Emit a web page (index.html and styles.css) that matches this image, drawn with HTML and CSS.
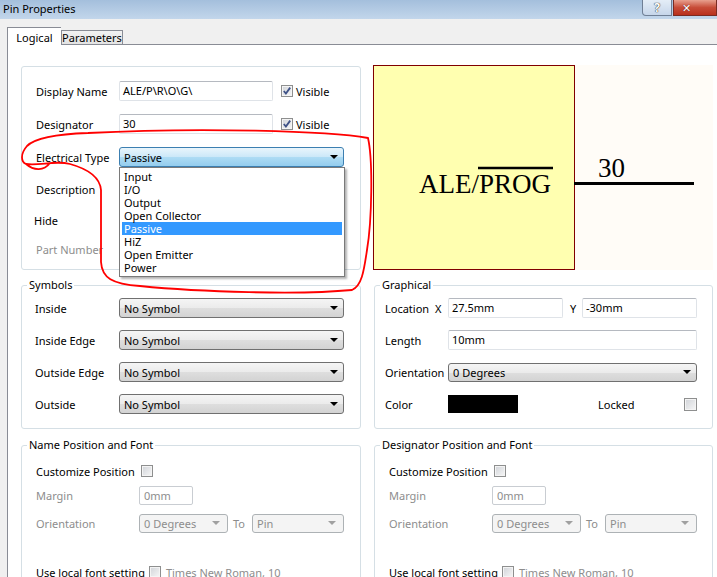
FILE: index.html
```html
<!DOCTYPE html>
<html lang="en">
<head>
  <meta charset="UTF-8" />
  <title>Pin Properties</title>
  <link rel="stylesheet" href="styles.css">
</head>
<body>

  <!-- Title bar -->
  <div class="titlebar">
    <span class="title">Pin Properties</span>
    <div class="caption-btns">
      <span class="btn-help">?</span>
      <span class="btn-close">✕</span>
    </div>
  </div>

  <!-- Tabs -->
  <div class="tabs">
    <div class="tab active">Logical</div>
    <div class="tab">Parameters</div>
  </div>

  <div class="page">
    <div class="grid">

      <!-- General -->
      <div class="box general">
        <div class="field">
          <label>Display Name</label>
          <div class="txt name">ALE/P\R\O\G\</div>
          <span class="chk checked"><svg viewBox="0 0 11 11"><path d="M2 5.5 L4.3 8.3 L9 1.8" /></svg></span>
          <span class="chk-label">Visible</span>
        </div>
        <div class="field">
          <label>Designator</label>
          <div class="txt name">30</div>
          <span class="chk checked"><svg viewBox="0 0 11 11"><path d="M2 5.5 L4.3 8.3 L9 1.8" /></svg></span>
          <span class="chk-label">Visible</span>
        </div>
        <div class="field">
          <label>Electrical Type</label>
          <div class="combo">
            <div class="sel hot wide"><span>Passive</span><i class="arrow"></i></div>
            <ul class="droplist">
              <li>Input</li>
              <li>I/O</li>
              <li>Output</li>
              <li>Open Collector</li>
              <li class="selected">Passive</li>
              <li>HiZ</li>
              <li>Open Emitter</li>
              <li>Power</li>
            </ul>
          </div>
        </div>
        <div class="field">
          <label>Description</label>
          <div class="txt wide"></div>
        </div>
        <div class="field">
          <label class="hide-label">Hide</label>
          <span class="chk hide-chk"></span>
        </div>
        <div class="field">
          <label class="off">Part Number</label>
          <div class="txt wide"></div>
        </div>
      </div>

      <!-- Preview -->
      <div class="preview">
        <svg width="341" height="205" viewBox="0 0 341 205">
          <rect x="1.5" y="0.5" width="201" height="204" fill="#ffffb0" stroke="#800000" stroke-width="1" />
          <text x="47" y="128" class="pv-text">ALE/PROG</text>
          <line x1="106" y1="103" x2="181" y2="103" stroke="#000" stroke-width="2.5" />
          <line x1="202" y1="118.5" x2="322" y2="118.5" stroke="#000" stroke-width="3" />
          <text x="226" y="112" class="pv-text">30</text>
        </svg>
      </div>

      <!-- Symbols -->
      <fieldset class="group sym">
        <legend>Symbols</legend>
        <div class="inner">
          <div class="srow"><label>Inside</label><div class="sel wide"><span>No Symbol</span><i class="arrow"></i></div></div>
          <div class="srow"><label>Inside Edge</label><div class="sel wide"><span>No Symbol</span><i class="arrow"></i></div></div>
          <div class="srow"><label>Outside Edge</label><div class="sel wide"><span>No Symbol</span><i class="arrow"></i></div></div>
          <div class="srow"><label>Outside</label><div class="sel wide"><span>No Symbol</span><i class="arrow"></i></div></div>
        </div>
      </fieldset>

      <!-- Graphical -->
      <fieldset class="group graph">
        <legend>Graphical</legend>
        <div class="inner">
          <div class="srow">
            <label class="loc">Location</label><span class="axis">X</span>
            <div class="txt half">27.5mm</div>
            <span class="axis y">Y</span>
            <div class="txt half">-30mm</div>
          </div>
          <div class="srow"><label class="glabel">Length</label><div class="txt full">10mm</div></div>
          <div class="srow"><label class="glabel">Orientation</label><div class="sel full"><span>0 Degrees</span><i class="arrow"></i></div></div>
          <div class="srow">
            <label class="glabel">Color</label>
            <span class="swatch"></span>
            <span class="locked">Locked</span>
            <span class="chk locked-chk"></span>
          </div>
        </div>
      </fieldset>

      <!-- Name position -->
      <fieldset class="group pos">
        <legend>Name Position and Font</legend>
        <div class="inner">
          <div class="prow first"><span>Customize Position</span><span class="chk"></span></div>
          <div class="prow"><label class="off">Margin</label><div class="txt off small">0mm</div></div>
          <div class="prow">
            <label class="off">Orientation</label>
            <div class="sel off deg"><span>0 Degrees</span><i class="arrow"></i></div>
            <span class="off to">To</span>
            <div class="sel off pin"><span>Pin</span><i class="arrow"></i></div>
          </div>
          <div class="prow font"><span>Use local font setting</span><span class="chk"></span><span class="off">Times New Roman, 10</span></div>
        </div>
      </fieldset>

      <!-- Designator position -->
      <fieldset class="group pos right">
        <legend>Designator Position and Font</legend>
        <div class="inner">
          <div class="prow first"><span>Customize Position</span><span class="chk"></span></div>
          <div class="prow"><label class="off">Margin</label><div class="txt off small">0mm</div></div>
          <div class="prow">
            <label class="off">Orientation</label>
            <div class="sel off deg"><span>0 Degrees</span><i class="arrow"></i></div>
            <span class="off to">To</span>
            <div class="sel off pin"><span>Pin</span><i class="arrow"></i></div>
          </div>
          <div class="prow font"><span>Use local font setting</span><span class="chk"></span><span class="off">Times New Roman, 10</span></div>
        </div>
      </fieldset>

    </div>
  </div>

  <!-- hand-drawn red marker -->
  <svg class="annotation" width="717" height="577" viewBox="0 0 717 577">
    <path d="M88 133 C60 134 36 137 27 146 C20 154 21 162 26 164 C40 166 55 160 70 164 C88 169 100 178 101 190 L101 262 C102 278 112 284 140 286 C200 292 300 295 352 290 C362 286 364 270 367 250 C372 220 373 160 368 138 C330 131 200 127 88 133 M26 164 C34 171 44 171 50 163" />
  </svg>

</body>
</html>
```

FILE: styles.css
```css
* { margin: 0; padding: 0; box-sizing: border-box; }

body {
  font-family: "Noto Sans", sans-serif;
  font-size: 11px;
  color: #000;
  background: #f0f0f0;
  width: 717px;
  height: 577px;
  overflow: hidden;
  position: relative;
}

/* title bar */
.titlebar {
  height: 19px;
  display: flex;
  align-items: flex-start;
  background: linear-gradient(#a4bfdc, #c2d6eb);
  padding-left: 3px;
}

.title { font-size: 11px; line-height: 17px; }

.caption-btns {
  margin-left: auto;
  display: flex;
}

.btn-help {
  width: 30px;
  height: 16px;
  border: 1px solid #6f7f95;
  border-top: none;
  border-radius: 0 0 0 4px;
  background: linear-gradient(#e4edf7, #c6d6ea);
  color: #fff;
  font-weight: bold;
  font-size: 12px;
  line-height: 15px;
  text-align: center;
  text-shadow: 0 0 1px #222, 0 0 1px #222;
}

.btn-close {
  width: 44px;
  height: 16px;
  margin-left: 1px;
  border: 1px solid #7a2b22;
  border-top: none;
  background: linear-gradient(#e8a08e, #c74c38 50%, #b9301d);
  color: #fff;
  font-size: 11px;
  line-height: 15px;
  padding-left: 8px;
  text-shadow: 0 0 1px #400;
}

/* tabs */
.tabs {
  height: 25px;
  display: flex;
  align-items: flex-end;
  padding-left: 7px;
}

.tab {
  height: 14px;
  width: 62px;
  border: 1px solid #898c95;
  border-bottom: none;
  background: linear-gradient(#f2f2f2, #e3e3e3);
  line-height: 13px;
  text-align: center;
}

.tab.active {
  height: 18px;
  width: 54px;
  margin-bottom: -1px;
  background: #fff;
  line-height: 19px;
  position: relative;
  z-index: 1;
  border-right: none;
}

.page {
  margin-left: 7px;
  height: 533px;
  background: #fff;
  border-left: 1px solid #898c95;
  border-top: 1px solid #898c95;
  padding: 20px 0 0 13px;
}

.grid {
  display: grid;
  grid-template-columns: 340px 341px;
  column-gap: 11px;
  align-items: start;
}

/* group boxes */
.box, .group {
  border: 1px solid #d5dfe5;
  border-radius: 3px;
}

.group {
  min-width: 0;
  padding: 0;
}

.group legend {
  margin-left: 5px;
  padding: 0 2px;
  line-height: 16px;
}

.general {
  margin-top: 1px;
  height: 204px;
  padding: 14px 0 0 14px;
  display: flex;
  flex-direction: column;
}

.field {
  height: 20px;
  display: flex;
  align-items: center;
}

.field:nth-child(2) { margin-top: 13px; }
.field:nth-child(3) { margin-top: 13px; }
.field:nth-child(4) { margin-top: 12px; }
.field:nth-child(5) { margin-top: 11px; }
.field:nth-child(6) { margin-top: 9px; }

.field label { width: 83px; }
.hide-label { margin-left: -2px; margin-right: 2px; }

label.off, .off { color: #8d8d8d; }

/* text boxes */
.txt {
  height: 20px;
  border: 1px solid #dfe3e8;
  border-top-color: #b5b9c0;
  border-radius: 2px;
  background: #fff;
  padding: 0 3px;
  line-height: 18px;
  white-space: nowrap;
}

.txt.name { width: 154px; }
.txt.wide { width: 225px; }
.txt.half { width: 115px; }
.txt.full { width: 249px; }
.txt.small { width: 54px; height: 19px; border-color: #c9cdd2; color: #8d8d8d; padding-left: 4px; }

/* checkboxes */
.chk {
  width: 12px;
  height: 12px;
  border: 1px solid #8e8f8f;
  background: linear-gradient(135deg, #d0d3d8, #f7f7f7);
  box-shadow: inset 0 0 0 1px #f4f4f4;
  display: inline-block;
  flex-shrink: 0;
}

.chk svg {
  display: block;
  width: 10px;
  height: 10px;
}

.chk svg path {
  fill: none;
  stroke: #3f5287;
  stroke-width: 2;
}

.field .chk { margin-left: 8px; margin-right: 3px; }
.field .hide-chk { margin-left: 0; width: 13px; height: 13px; }

/* selects */
.combo { position: relative; }

.sel {
  height: 20px;
  border: 1px solid #707070;
  border-radius: 3px;
  background: linear-gradient(#f5f5f5, #ebebeb 50%, #dedede 51%, #d3d3d3);
  display: flex;
  align-items: center;
  padding: 0 0 0 4px;
  position: relative;
}

.sel.wide { width: 225px; }
.sel.full { width: 249px; height: 19px; }

.sel.hot {
  border-color: #3c7fb1;
  background: linear-gradient(#e9f5fc, #cbe8f8 50%, #aedcf4 51%, #94cdee);
}

.sel .arrow {
  margin-left: auto;
  margin-right: 5px;
  width: 0;
  height: 0;
  border-left: 4px solid transparent;
  border-right: 4px solid transparent;
  border-top: 4px solid #000;
}

.sel.off {
  border-color: #adb2b5;
  background: #f4f4f4;
  height: 19px;
}

.sel.off .arrow { border-top-color: #a0a0a0; margin-right: 7px; }
.sel.deg { width: 89px; }
.sel.pin { width: 92px; }

.droplist {
  position: absolute;
  top: 100%;
  left: 0;
  width: 226px;
  list-style: none;
  background: #fff;
  border: 1px solid #7a7a7a;
  padding: 2px;
  box-shadow: 2px 2px 2px rgba(0, 0, 0, 0.3);
  z-index: 5;
}

.droplist li {
  height: 13px;
  line-height: 13px;
  padding-left: 2px;
}

.droplist li.selected {
  background: #3399ff;
  color: #fff;
}

/* preview */
.preview {
  height: 205px;
  background: #fffcf7;
}

.preview svg { display: block; }

.pv-text {
  font-family: "Liberation Serif", serif;
  font-size: 27px;
  fill: #000;
}

/* symbols + graphical */
.sym, .graph {
  margin-top: 7px;
  height: 152px;
}

.graph { margin-left: 2px; }

.inner { padding-left: 13px; }
.sym .inner, .graph .inner { margin-top: -1px; }
.graph .inner { padding: 0 15px 0 10px; }

.srow {
  height: 32px;
  display: flex;
  align-items: center;
}

.srow label { width: 84px; }
.srow .loc { width: 50px; }
.axis { width: 13px; }
.axis.y { margin-left: 7px; width: 12px; }
.srow .glabel { width: 63px; }

.swatch {
  width: 70px;
  height: 18px;
  background: #000;
}

.locked { margin-left: 80px; }
.locked-chk { margin-left: auto; width: 13px; height: 13px; }

/* position groups */
.pos {
  margin-top: 8px;
  height: 160px;
}

.pos.right { margin-left: 2px; }
.pos .inner { padding-left: 14px; }

.prow {
  height: 20px;
  display: flex;
  align-items: center;
  margin-top: 4px;
}

.prow.first { margin-top: 8px; }
.prow:nth-child(3) { margin-top: 8px; }
.prow.font { margin-top: 29px; }

.prow label { width: 103px; }
.prow.first .chk { margin-left: 6px; }
.prow .to { margin: 0 5px; width: 14px; }
.prow.font .chk { margin: 0 5px 0 4px; }

/* red marker */
.annotation {
  position: absolute;
  top: 0;
  left: 0;
  pointer-events: none;
  z-index: 10;
}

.annotation path {
  fill: none;
  stroke: #ff0000;
  stroke-width: 1.8;
}
```
